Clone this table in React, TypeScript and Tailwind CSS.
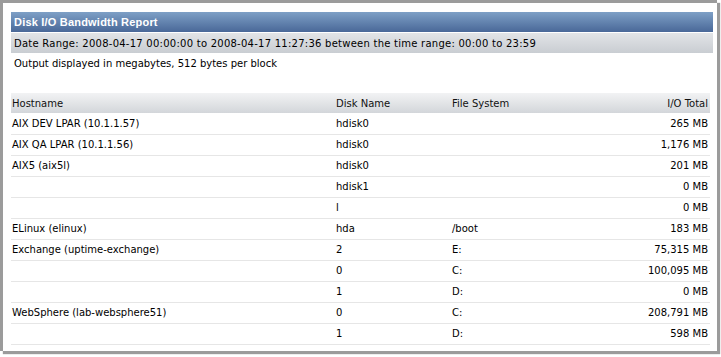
const rows: [string, string, string, string][] = [
  ["AIX DEV LPAR (10.1.1.57)", "hdisk0", "", "265 MB"],
  ["AIX QA LPAR (10.1.1.56)", "hdisk0", "", "1,176 MB"],
  ["AIX5 (aix5l)", "hdisk0", "", "201 MB"],
  ["", "hdisk1", "", "0 MB"],
  ["", "l", "", "0 MB"],
  ["ELinux (elinux)", "hda", "/boot", "183 MB"],
  ["Exchange (uptime-exchange)", "2", "E:", "75,315 MB"],
  ["", "0", "C:", "100,095 MB"],
  ["", "1", "D:", "0 MB"],
  ["WebSphere (lab-websphere51)", "0", "C:", "208,791 MB"],
  ["", "1", "D:", "598 MB"],
];

export default function App() {
  return (
    <div className="w-[721px] h-[357px] bg-white font-['DejaVu_Sans',sans-serif] text-[10px] text-black">
      <div className="w-[717px] h-[351px] border-l-[3px] border-t-[3px] border-[#9b9b9b] bg-white shadow-[3px_3px_1px_#9b9b9b] pl-[8px] pr-[4px] pt-[9px]">
        <div className="h-[20px] flex items-center pl-[3px] bg-gradient-to-b from-[#7ea0c6] to-[#4a6898] text-white font-bold font-['Liberation_Sans',sans-serif] text-[11px] tracking-[0.2px]">
          Disk I/O Bandwidth Report
        </div>
        <div className="mt-[1px] h-[20px] flex items-center pl-[3px] bg-gradient-to-b from-[#e2e4e7] to-[#c9cdd2] tracking-[0.25px]">
          Date Range: 2008-04-17 00:00:00 to 2008-04-17 11:27:36 between the time range: 00:00 to 23:59
        </div>
        <div className="h-[20px] flex items-center pl-[3px]">
          Output displayed in megabytes, 512 bytes per block
        </div>
        <table className="mt-[20px] w-[699px] table-fixed border-collapse">
          <colgroup>
            <col className="w-[325px]" />
            <col className="w-[115px]" />
            <col />
            <col className="w-[150px]" />
          </colgroup>
          <thead>
            <tr className="h-[20px] bg-gradient-to-b from-[#f2f3f4] to-[#d3d6da] text-[#111]">
              <th className="pl-[1px] text-left font-normal">Hostname</th>
              <th className="text-left font-normal">Disk Name</th>
              <th className="pl-[1px] text-left font-normal">File System</th>
              <th className="pr-[2px] text-right font-normal">I/O Total</th>
            </tr>
          </thead>
          <tbody>
            {rows.map((r, i) => (
              <tr key={i} className="h-[21px] border-b border-[#e6e6e6]">
                <td className="pl-[1px]">{r[0]}</td>
                <td>{r[1]}</td>
                <td className="pl-[1px]">{r[2]}</td>
                <td className="pr-[2px] text-right">{r[3]}</td>
              </tr>
            ))}
          </tbody>
        </table>
      </div>
    </div>
  );
}
